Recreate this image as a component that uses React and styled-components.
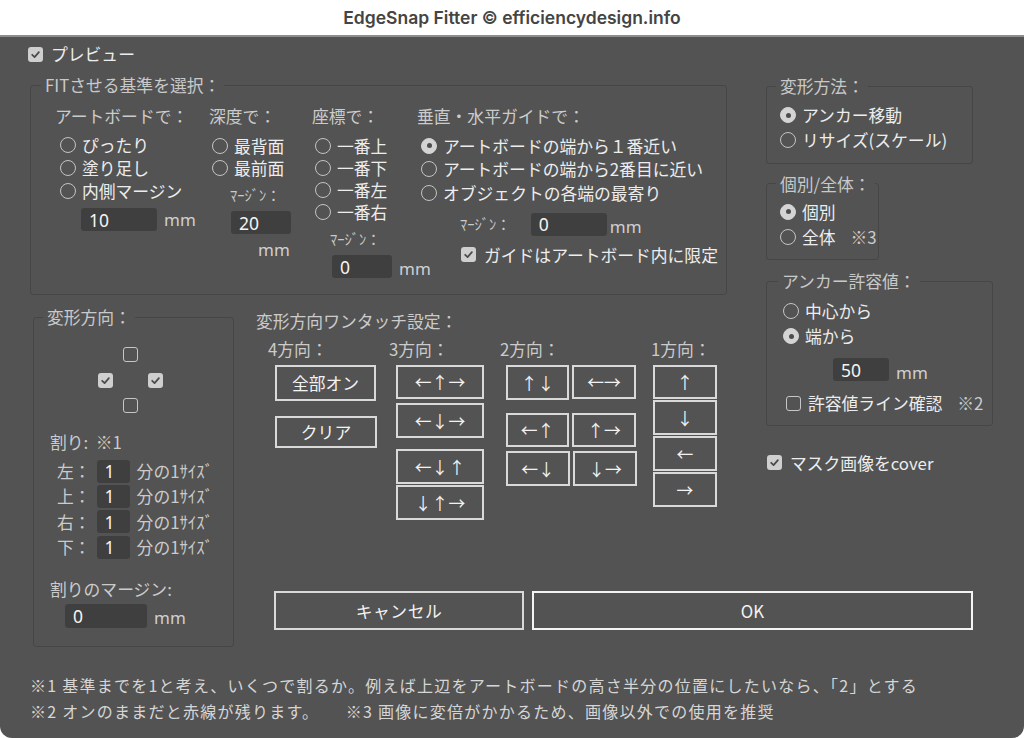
import React from "react";
import styled, { createGlobalStyle } from "styled-components";

const GlobalStyle = createGlobalStyle`
  html, body { margin: 0; padding: 0; background: #fff; }
  body { font-family: "Noto Sans CJK JP", "Noto Sans", sans-serif; }
  * { box-sizing: border-box; }
`;

const Window = styled.div`
  width: 1024px;
  height: 738px;
  display: flex;
  flex-direction: column;
`;

const TitleBar = styled.div`
  height: 37px;
  flex: none;
  display: flex;
  align-items: center;
  justify-content: center;
  background: #fff;
  border-bottom: 2px solid #8e8e8e;
  font-family: Inter, "Liberation Sans", sans-serif;
  font-weight: 600;
  font-size: 17.5px;
  color: #444;
`;

const Body = styled.div`
  flex: 1;
  background: #535353;
  border-radius: 0 0 12px 12px;
  padding: 5px 0 0 30px;
  color: #ededed;
  font-size: 16.8px;
  display: flex;
  flex-direction: column;
`;

const Row = styled.div`
  display: flex;
  align-items: center;
  gap: ${(p) => p.$gap ?? 7}px;
  height: ${(p) => p.$h ?? 24}px;
  margin-left: ${(p) => p.$ml ?? 0}px;
  margin-top: ${(p) => p.$mt ?? 0}px;
  white-space: nowrap;
`;

const Box = styled.span`
  width: 15px;
  height: 15px;
  flex: none;
  border-radius: 3px;
  display: inline-flex;
  align-items: center;
  justify-content: center;
  background: ${(p) => (p.$on ? "#cfcfcf" : "transparent")};
  border: ${(p) => (p.$on ? "none" : "1.5px solid #c6c6c6")};
`;

const Dot = styled.span`
  width: 16px;
  height: 16px;
  flex: none;
  border-radius: 50%;
  display: inline-flex;
  align-items: center;
  justify-content: center;
  border: 1.5px solid ${(p) => (p.$on ? "#d4d4d4" : "#c4c4c4")};
  background: ${(p) => (p.$on ? "#d4d4d4" : "transparent")};

  &::after {
    content: "";
    display: ${(p) => (p.$on ? "block" : "none")};
    width: 5px;
    height: 5px;
    border-radius: 50%;
    background: #4d4d4d;
  }
`;

const Check = ({ on }) => (
  <Box $on={on}>
    {on && (
      <svg width="11" height="11" viewBox="0 0 12 12">
        <path d="M2.4 6.3 L5 8.8 L9.7 3.4" fill="none" stroke="#4b4b4b" strokeWidth="1.9" strokeLinecap="round" strokeLinejoin="round" />
      </svg>
    )}
  </Box>
);

const MainGrid = styled.div`
  display: grid;
  grid-template-columns: 222px 510px 232px;
  grid-template-rows: 232px 266px auto;
  grid-template-areas:
    "fit fit side"
    "dir touch side"
    "dir actions actions";
  margin-top: 9px;
`;

const Group = styled.fieldset`
  margin: 0 0 0 ${(p) => p.$ml ?? 0}px;
  padding: 0;
  width: ${(p) => p.$w}px;
  min-width: 0;
  border: 1px solid #464646;
  border-radius: 3px;
  align-self: start;
  grid-area: ${(p) => p.$area ?? "auto"};
`;

const Legend = styled.legend`
  margin-left: ${(p) => p.$ml}px;
  padding: 0 4px;
  font-size: 16.8px;
  line-height: 20px;
  color: #c9c9c9;
`;

const Inner = styled.div`
  padding: ${(p) => p.$pad};
  display: flex;
  flex-direction: column;
`;

const FitGrid = styled.div`
  display: grid;
  grid-template-columns: 154px 103px 105px 1fr;
  padding: 10px 0 16px 24px;
`;

const Col = styled.div`
  display: flex;
  flex-direction: column;
  align-items: flex-start;
`;

const Label = styled.div`
  line-height: 22px;
  color: #cbcbcb;
  white-space: pre;
  margin-left: ${(p) => p.$ml ?? 0}px;
  margin-top: ${(p) => p.$mt ?? 0}px;
`;

const Small = styled.div`
  font-size: 14.5px;
  line-height: 18px;
  color: #cbcbcb;
  margin-left: ${(p) => p.$ml ?? 0}px;
  margin-top: ${(p) => p.$mt ?? 0}px;
`;

const Options = styled.div`
  display: flex;
  flex-direction: column;
  margin-left: ${(p) => p.$ml ?? 0}px;
  margin-top: ${(p) => p.$mt ?? 0}px;
`;

const Num = styled.input`
  width: ${(p) => p.$w}px;
  height: ${(p) => p.$h ?? 23}px;
  flex: none;
  border: none;
  outline: none;
  border-radius: 3px;
  background: #3f3f3f;
  color: #f4f4f4;
  font-family: "Noto Sans", sans-serif;
  font-size: 17.5px;
  padding: 0 0 0 8px;
  margin-left: ${(p) => p.$ml ?? 0}px;
`;

const Unit = styled.span`
  color: #cfcfcf;
  font-family: "Noto Sans", sans-serif;
  font-size: 17px;
  line-height: 22px;
  margin-left: ${(p) => p.$ml ?? 0}px;
  margin-top: ${(p) => p.$mt ?? 0}px;
  padding-top: ${(p) => p.$dy ?? 0}px;
`;

const Note = styled.span`
  color: #cbcbcb;
  margin-left: ${(p) => p.$ml ?? 0}px;
`;

const Side = styled.div`
  grid-area: side;
  display: flex;
  flex-direction: column;
  align-items: flex-start;
  padding: 1px 0 0 4px;
`;

const Cross = styled.div`
  display: grid;
  grid-template-columns: repeat(3, 25px);
  grid-template-rows: repeat(3, 25.5px);
  place-items: center;
  margin: 15px 0 0 59px;
`;

const Cell = styled.div`
  grid-column: ${(p) => p.$c};
  grid-row: ${(p) => p.$r};
  display: flex;
`;

const SplitRows = styled.div`
  display: flex;
  flex-direction: column;
  gap: 2.4px;
  margin: 7px 0 0 23px;
`;

const Touch = styled.div`
  grid-area: touch;
  padding: 3px 0 0 4px;
`;

const TouchCols = styled.div`
  display: flex;
  margin: 6px 0 0 12px;
`;

const TouchCol = styled.div`
  width: ${(p) => p.$w}px;
  flex: none;
  display: flex;
  flex-direction: column;
  align-items: flex-start;
`;

const Stack = styled.div`
  display: flex;
  flex-direction: column;
  margin: 5px 0 0 ${(p) => p.$ml}px;
`;

const Pair = styled.div`
  display: flex;
  gap: 3px;
  margin-top: ${(p) => p.$mt ?? 0}px;
`;

const Btn = styled.button`
  width: ${(p) => p.$w}px;
  height: ${(p) => p.$h ?? 35}px;
  margin-top: ${(p) => p.$mt ?? 0}px;
  flex: none;
  display: flex;
  align-items: center;
  justify-content: center;
  padding: 0;
  background: transparent;
  border: ${(p) => p.$b ?? 2}px solid ${(p) => (p.$b > 2 ? "#f4f4f4" : "#d9d9d9")};
  color: #f2f2f2;
  font-family: inherit;
  font-size: 16.8px;
  letter-spacing: ${(p) => p.$ls ?? 0}px;
`;

const Actions = styled.div`
  grid-area: actions;
  display: flex;
  gap: 8px;
  margin: 18px 0 0 22px;
`;

const Notes = styled.div`
  margin-top: 25px;
  font-size: 16px;
  line-height: 26px;
  letter-spacing: 1.25px;
  color: #d6d6d6;
  white-space: pre;
`;

const Radio = ({ on, h = 23, children }) => (
  <Row $h={h} $gap={6}>
    <Dot $on={on} />
    {children}
  </Row>
);

const SplitRow = ({ side }) => (
  <Row $h={23} $gap={6}>
    <Label>{side}：</Label>
    <Num $w={33} defaultValue="1" />
    <Label $ml={1}>分の1ｻｲｽﾞ</Label>
  </Row>
);

export default function App() {
  return (
    <Window>
      <GlobalStyle />
      <TitleBar>EdgeSnap Fitter © efficiencydesign.info</TitleBar>
      <Body>
        <Row $ml={-2} $gap={8}>
          <Check on />
          プレビュー
        </Row>

        <MainGrid>
          <Group $area="fit" $w={697}>
            <Legend $ml={10}>FITさせる基準を選択：</Legend>
            <FitGrid>
              <Col>
                <Label>アートボードで：</Label>
                <Options $ml={5} $mt={6.5}>
                  <Radio>ぴったり</Radio>
                  <Radio>塗り足し</Radio>
                  <Radio>内側マージン</Radio>
                </Options>
                <Row $h={23} $ml={26} $mt={5.5}>
                  <Num $w={76} defaultValue="10" />
                  <Unit>mm</Unit>
                </Row>
              </Col>
              <Col>
                <Label>深度で：</Label>
                <Options $ml={3} $mt={8}>
                  <Radio h={22}>最背面</Radio>
                  <Radio h={22}>最前面</Radio>
                </Options>
                <Small $ml={21} $mt={7}>ﾏｰｼﾞﾝ：</Small>
                <Num $w={60} $ml={22} style={{ marginTop: 7 }} defaultValue="20" />
                <Unit $ml={49} $mt={5}>mm</Unit>
              </Col>
              <Col>
                <Label>座標で：</Label>
                <Options $ml={3} $mt={8}>
                  <Radio h={22}>一番上</Radio>
                  <Radio h={22}>一番下</Radio>
                  <Radio h={22}>一番左</Radio>
                  <Radio h={22}>一番右</Radio>
                </Options>
                <Small $ml={18} $mt={7}>ﾏｰｼﾞﾝ：</Small>
                <Row $h={23} $ml={20} $mt={7}>
                  <Num $w={60} defaultValue="0" />
                  <Unit $dy={4}>mm</Unit>
                </Row>
              </Col>
              <Col>
                <Label>垂直・水平ガイドで：</Label>
                <Options $ml={4} $mt={7}>
                  <Radio on h={23.5}>アートボードの端から１番近い</Radio>
                  <Radio h={23.5}>アートボードの端から2番目に近い</Radio>
                  <Radio h={23.5}>オブジェクトの各端の最寄り</Radio>
                </Options>
                <Row $h={23} $ml={43} $mt={8} $gap={0}>
                  <Small>ﾏｰｼﾞﾝ：</Small>
                  <Num $w={76} $ml={20} defaultValue="0" />
                  <Unit $ml={3} $dy={6}>mm</Unit>
                </Row>
                <Row $h={23} $ml={44} $mt={7.5} $gap={8}>
                  <Check on />
                  ガイドはアートボード内に限定
                </Row>
              </Col>
            </FitGrid>
          </Group>

          <Side>
            <Group $w={207}>
              <Legend $ml={9}>変形方法：</Legend>
              <Inner $pad="6.5px 0 10px 13px">
                <Radio on h={25}>アンカー移動</Radio>
                <Radio h={25}>リサイズ(スケール)</Radio>
              </Inner>
            </Group>
            <Group $w={113} style={{ marginTop: 10 }}>
              <Legend $ml={9}>個別/全体：</Legend>
              <Inner $pad="5.5px 0 10px 13px">
                <Radio on h={25}>個別</Radio>
                <Radio h={25}>
                  全体<Note $ml={9}>※3</Note>
                </Radio>
              </Inner>
            </Group>
            <Group $w={227} style={{ marginTop: 11 }}>
              <Legend $ml={11}>アンカー許容値：</Legend>
              <Inner $pad="7.5px 0 10px 16px">
                <Radio h={25}>中心から</Radio>
                <Radio on h={25}>端から</Radio>
                <Row $h={23} $ml={50} $mt={9.5}>
                  <Num $w={56} defaultValue="50" />
                  <Unit $dy={6}>mm</Unit>
                </Row>
                <Row $h={23} $ml={3} $mt={10.5}>
                  <Check />
                  許容値ライン確認<Note $ml={8}>※2</Note>
                </Row>
              </Inner>
            </Group>
            <Row $ml={1} $mt={25} $gap={8}>
              <Check on />
              マスク画像をcover
            </Row>
          </Side>

          <Group $area="dir" $w={201} $ml={3}>
            <Legend $ml={9}>変形方向：</Legend>
            <Inner $pad="0 0 18px 0">
              <Cross>
                <Cell $c={2} $r={1}><Check /></Cell>
                <Cell $c={1} $r={2}><Check on /></Cell>
                <Cell $c={3} $r={2}><Check on /></Cell>
                <Cell $c={2} $r={3}><Check /></Cell>
              </Cross>
              <Label $ml={16} $mt={12}>割り:  ※1</Label>
              <SplitRows>
                <SplitRow side="左" />
                <SplitRow side="上" />
                <SplitRow side="右" />
                <SplitRow side="下" />
              </SplitRows>
              <Label $ml={16} $mt={19.5}>割りのマージン:</Label>
              <Row $h={24} $ml={31} $mt={4}>
                <Num $w={82} $h={24} defaultValue="0" />
                <Unit $dy={3}>mm</Unit>
              </Row>
            </Inner>
          </Group>

          <Touch>
            <Label>変形方向ワンタッチ設定：</Label>
            <TouchCols>
              <TouchCol $w={121}>
                <Label>4方向：</Label>
                <Stack $ml={7}>
                  <Btn $w={101} $h={36}>全部オン</Btn>
                  <Btn $w={102} $h={32} $mt={15}>クリア</Btn>
                </Stack>
              </TouchCol>
              <TouchCol $w={111}>
                <Label>3方向：</Label>
                <Stack $ml={7}>
                  <Btn $w={88} $h={34}>←↑→</Btn>
                  <Btn $w={88} $mt={4}>←↓→</Btn>
                  <Btn $w={88} $mt={11}>←↓↑</Btn>
                  <Btn $w={88} $mt={1}>↓↑→</Btn>
                </Stack>
              </TouchCol>
              <TouchCol $w={151}>
                <Label>2方向：</Label>
                <Stack $ml={6}>
                  <Pair>
                    <Btn $w={63}>↑↓</Btn>
                    <Btn $w={64} $h={34}>←→</Btn>
                  </Pair>
                  <Pair $mt={13}>
                    <Btn $w={63} $h={34}>←↑</Btn>
                    <Btn $w={64} $h={34}>↑→</Btn>
                  </Pair>
                  <Pair $mt={4}>
                    <Btn $w={64}>←↓</Btn>
                    <Btn $w={64}>↓→</Btn>
                  </Pair>
                </Stack>
              </TouchCol>
              <TouchCol $w={80}>
                <Label>1方向：</Label>
                <Stack $ml={2}>
                  <Btn $w={64} $h={34}>↑</Btn>
                  <Btn $w={64} $mt={1}>↓</Btn>
                  <Btn $w={64} $mt={1}>←</Btn>
                  <Btn $w={64} $mt={1}>→</Btn>
                </Stack>
              </TouchCol>
            </TouchCols>
          </Touch>

          <Actions>
            <Btn $w={250} $h={39} $ls={0.5}>キャンセル</Btn>
            <Btn $w={441} $h={39} $b={2.5}>OK</Btn>
          </Actions>
        </MainGrid>

        <Notes>
          {"※1 基準までを1と考え、いくつで割るか。例えば上辺をアートボードの高さ半分の位置にしたいなら、「2」とする\n"}
          {"※2 オンのままだと赤線が残ります。　　※3 画像に変倍がかかるため、画像以外での使用を推奨"}
        </Notes>
      </Body>
    </Window>
  );
}
